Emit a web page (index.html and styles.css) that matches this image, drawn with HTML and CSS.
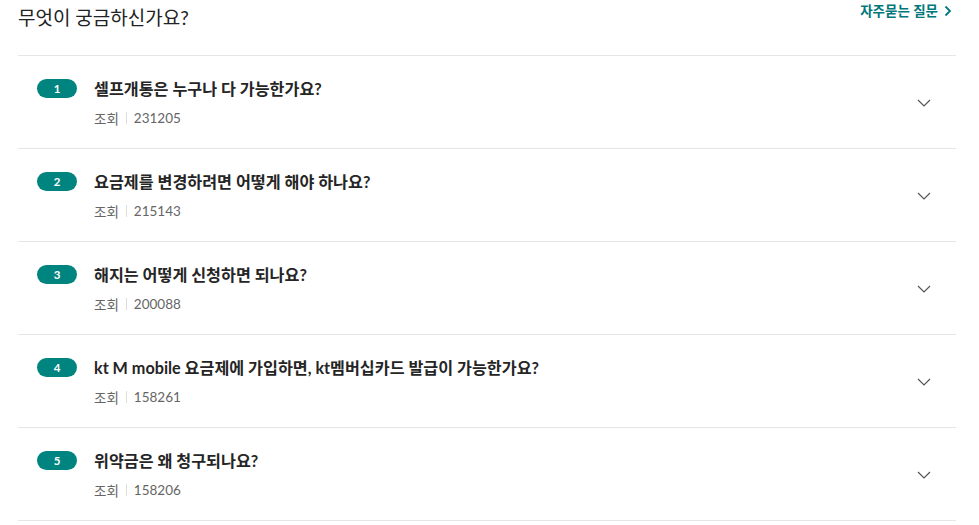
FILE: index.html
```html
<!DOCTYPE html>
<html lang="ko">
<head>
<meta charset="utf-8">
<link rel="stylesheet" href="styles.css">
</head>
<body>
<div class="faq">
  <div class="head">
    <h2 class="title">무엇이 궁금하신가요?</h2>
    <a class="more">자주묻는 질문 <svg width="8" height="12" viewBox="0 0 8 12"><path d="M1.5 1.5 L6 6 L1.5 10.5" fill="none" stroke="#00777b" stroke-width="1.8"/></svg></a>
  </div>
  <ul class="list">
    <li class="item"><div class="q"><div class="qline"><span class="num">1</span><span class="qtext">셀프개통은 누구나 다 가능한가요?</span></div><div class="meta"><span>조회</span><i class="bar"></i><span>231205</span></div></div><svg class="chev" width="14" height="8" viewBox="0 0 14 8"><path d="M1 1 L7 7 L13 1" fill="none" stroke="#555" stroke-width="1.2"/></svg></li>
    <li class="item"><div class="q"><div class="qline"><span class="num">2</span><span class="qtext">요금제를 변경하려면 어떻게 해야 하나요?</span></div><div class="meta"><span>조회</span><i class="bar"></i><span>215143</span></div></div><svg class="chev" width="14" height="8" viewBox="0 0 14 8"><path d="M1 1 L7 7 L13 1" fill="none" stroke="#555" stroke-width="1.2"/></svg></li>
    <li class="item"><div class="q"><div class="qline"><span class="num">3</span><span class="qtext">해지는 어떻게 신청하면 되나요?</span></div><div class="meta"><span>조회</span><i class="bar"></i><span>200088</span></div></div><svg class="chev" width="14" height="8" viewBox="0 0 14 8"><path d="M1 1 L7 7 L13 1" fill="none" stroke="#555" stroke-width="1.2"/></svg></li>
    <li class="item"><div class="q"><div class="qline"><span class="num">4</span><span class="qtext">kt M mobile 요금제에 가입하면, kt멤버십카드 발급이 가능한가요?</span></div><div class="meta"><span>조회</span><i class="bar"></i><span>158261</span></div></div><svg class="chev" width="14" height="8" viewBox="0 0 14 8"><path d="M1 1 L7 7 L13 1" fill="none" stroke="#555" stroke-width="1.2"/></svg></li>
    <li class="item"><div class="q"><div class="qline"><span class="num">5</span><span class="qtext">위약금은 왜 청구되나요?</span></div><div class="meta"><span>조회</span><i class="bar"></i><span>158206</span></div></div><svg class="chev" width="14" height="8" viewBox="0 0 14 8"><path d="M1 1 L7 7 L13 1" fill="none" stroke="#555" stroke-width="1.2"/></svg></li>
  </ul>
</div>
</body>
</html>
```
FILE: styles.css
```css
* { box-sizing: border-box; }
body {
  margin: 0;
  background: #fff;
  font-family: Lato, "Noto Sans CJK KR", sans-serif;
  color: #222;
}
.faq {
  padding: 0 23px 0 18px;
}
.head {
  display: flex;
  justify-content: space-between;
  align-items: flex-start;
  height: 56px;
  border-bottom: 1px solid #e6e6e6;
}
.title {
  margin: 6px 0 0;
  font-size: 19px;
  font-weight: 400;
  color: #222;
  line-height: 24px;
}
.more {
  margin-top: 1px;
  display: flex;
  align-items: center;
  gap: 6px;
  font-size: 13.5px;
  font-weight: 700;
  color: #00777b;
  line-height: 20px;
  margin-right: 4px;
}
.list {
  list-style: none;
  margin: 0;
  padding: 0;
}
.item {
  display: flex;
  align-items: center;
  justify-content: space-between;
  height: 93px;
  border-bottom: 1px solid #e6e6e6;
  padding: 0 25px 0 19px;
}
.qline {
  display: flex;
  align-items: center;
  gap: 17px;
}
.num {
  display: inline-flex;
  align-items: center;
  justify-content: center;
  width: 40px;
  height: 19px;
  border-radius: 10px;
  background: #00847f;
  color: #fff;
  font-size: 11.5px;
  font-weight: 700;
}
.qtext {
  font-size: 16.2px;
  font-weight: 700;
  color: #252525;
  line-height: 24px;
}
.meta {
  margin-top: 7px;
  padding-left: 57px;
  display: flex;
  align-items: center;
  gap: 7px;
  font-size: 13.5px;
  color: #666;
}
.bar {
  width: 1px;
  height: 12px;
  background: #ddd;
}
.chev {
  margin-top: 2px;
}
```
